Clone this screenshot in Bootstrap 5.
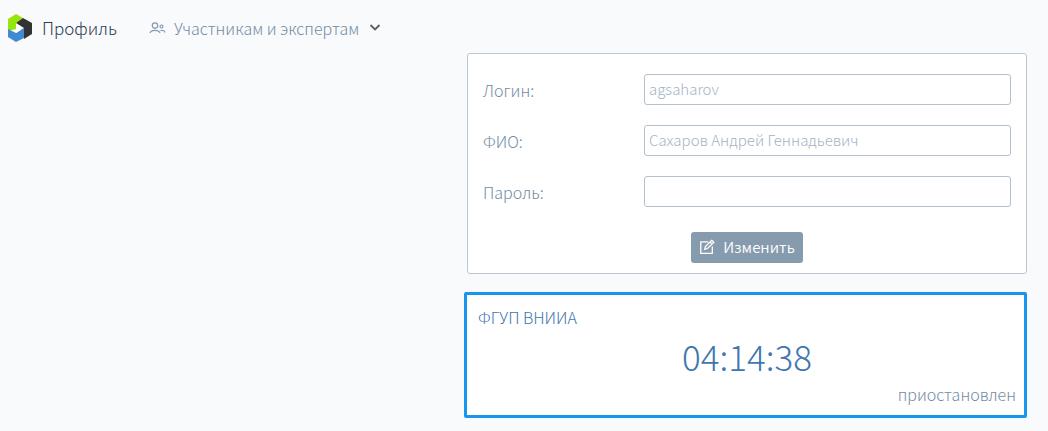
<!DOCTYPE html>
<html lang="ru">
<head>
<meta charset="utf-8">
<meta name="viewport" content="width=device-width, initial-scale=1">
<title>Профиль</title>
<link href="https://cdn.jsdelivr.net/npm/bootstrap@5.3.0/dist/css/bootstrap.min.css" rel="stylesheet">
<style>
body{background:#f9fafc;color:#728ba3;font-family:"Noto Sans CJK SC",sans-serif;font-size:16px;line-height:24px;font-weight:300}
.topbar{height:53px;padding:2px 7px 0}
.brand-link{color:#2c3e50;font-size:17px}
.menu-link{color:#728ba3;font-size:16px}
.layout{display:grid;grid-template-columns:464fr 563fr;padding-right:21px}
.side{grid-column:2}
.profile{margin-left:3px;padding:20px 15px 10px;background:#fff;border:1px solid #b9c7d5;border-radius:3px}
.field{display:grid;grid-template-columns:161fr 367fr;margin-bottom:20px}
.field label{padding-top:4px;line-height:24px}
.field .form-control{height:31px;padding:0 4px 2px;border:1px solid #b2c0cd;border-radius:3px;color:#a3b4c5;font-size:15px;font-weight:300;line-height:27px;background:#fff}
.edit-row{padding-top:5px}
.btn-edit{height:31px;padding:0 8px 1px;border:0;border-radius:3px;background:#869bae;color:#fff;font-size:15px;font-weight:350;line-height:30px}
.timer{margin-top:18px;padding:10px 8px 9px 11px;background:#fff;border:3px solid #1796ed;border-radius:2px;color:#3f76af}
.clock{font-size:35px;line-height:53px}
.state{color:#728ba3}
</style>
</head>
<body>
<header class="topbar d-flex align-items-center">
<a href="#" class="brand-link d-flex align-items-center text-decoration-none">
<svg width="27" height="28" viewBox="0 0 27 28" class="me-2" aria-hidden="true">
<path fill="#96e60a" d="M9 0 16 4 9 9V15L1 17V5Z"/>
<path fill="#333" d="M16 4 25 9V20L17 25V18L9 13V9Z"/>
<path fill="#4189d0" d="M1 15 9 19 17 14V24L9 28 1 23Z"/>
<path fill="#fff" d="M9 9 17 14 9 19Z"/>
</svg>Профиль</a>
<a href="#" class="menu-link d-flex align-items-center text-decoration-none ms-4">
<svg class="me-2 ms-2" width="17" height="12" viewBox="0 0 17 12" fill="none" stroke="#8299ae" stroke-width="1.2" aria-hidden="true"><circle cx="6" cy="3.6" r="2.7"/><circle cx="12.5" cy="4.5" r="1.5"/><path d="M1 11C2 7.5 10 7.5 11 11M11.5 8.7C13.5 7.7 15.5 8.7 16 10.5"/></svg>Участникам и экспертам
<svg class="ms-2" width="16" height="12" viewBox="0 0 16 12" fill="none" stroke="#59626c" stroke-width="1.9" aria-hidden="true"><path d="M3.5 3 8 7.5 12.5 3"/></svg></a>
</header>
<main class="layout">
<div class="side">
<form class="profile">
<div class="field"><label for="login">Логин:</label><input id="login" class="form-control" type="text" value="agsaharov"></div>
<div class="field"><label for="fio">ФИО:</label><input id="fio" class="form-control" type="text" value="Сахаров Андрей Геннадьевич"></div>
<div class="field"><label for="pass">Пароль:</label><input id="pass" class="form-control" type="password"></div>
<div class="edit-row d-flex justify-content-center">
<button type="button" class="btn btn-edit d-flex align-items-center"><svg class="me-2" width="16" height="16" viewBox="0 0 16 16" fill="none" stroke="#fff" stroke-width="1.3" aria-hidden="true"><path d="M9.3 2.8H1.8V14.3H13.3V7.5M12.7 1.3 14.8 3.3 8.5 9.5 5.7 10.3 6.4 7.5ZM11 3 13 5"/></svg>Изменить</button>
</div>
</form>
<section class="timer">
<div>ФГУП ВНИИА</div>
<div class="clock text-center">04:14:38</div>
<div class="state text-end">приостановлен</div>
</section>
</div>
</main>
<script src="https://cdn.jsdelivr.net/npm/bootstrap@5.3.0/dist/js/bootstrap.bundle.min.js"></script>
</body>
</html>
